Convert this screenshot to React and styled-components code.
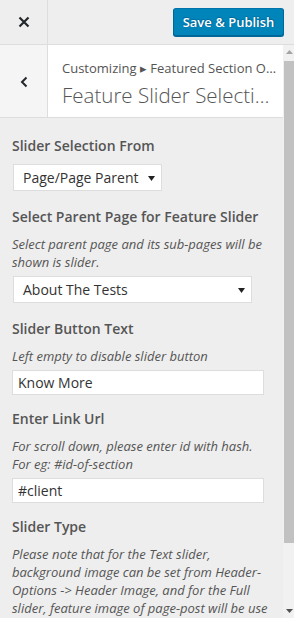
import React from "react";
import styled, { createGlobalStyle } from "styled-components";

const controls = [
  {
    id: 1,
    title: "Slider Selection From",
    type: "select",
    value: "Page/Page Parent",
    width: 149,
  },
  {
    id: 2,
    title: "Select Parent Page for Feature Slider",
    description: ["Select parent page and its sub-pages will be shown is slider."],
    type: "select",
    value: "About The Tests",
    width: 239,
  },
  {
    id: 3,
    title: "Slider Button Text",
    description: ["Left empty to disable slider button"],
    type: "text",
    value: "Know More",
  },
  {
    id: 4,
    title: "Enter Link Url",
    description: ["For scroll down, please enter id with hash.", "For eg: #id-of-section"],
    type: "text",
    value: "#client",
  },
  {
    id: 5,
    title: "Slider Type",
    description: [
      "Please note that for the Text slider, background image can be set from Header-Options -> Header Image, and for the Full slider, feature image of page-post will be use",
    ],
  },
];

const App = () => {
  return (
    <>
      <GlobalStyle />
      <Frame>
        <Header>
          <CloseButton aria-label="Close">
            <svg width="12" height="12" viewBox="0 0 12 12">
              <path d="M1.5 1.5 L10.5 10.5 M10.5 1.5 L1.5 10.5" stroke="#23282d" strokeWidth="2.2" fill="none" />
            </svg>
          </CloseButton>
          <PublishButton>Save &amp; Publish</PublishButton>
        </Header>
        <Body>
          <Main>
            <PanelHeading>
              <BackButton aria-label="Back">
                <svg width="10" height="12" viewBox="0 0 10 12">
                  <path d="M7.5 1.5 L3 6 L7.5 10.5" stroke="#23282d" strokeWidth="2" fill="none" />
                </svg>
              </BackButton>
              <HeadingText>
                <Breadcrumb>Customizing ▸ Featured Section Options</Breadcrumb>
                <PanelTitle>Feature Slider Selection</PanelTitle>
              </HeadingText>
            </PanelHeading>
            <Controls>
              {controls.map((c) => (
                <Control key={c.id} $space={c.type === "select" ? 16 : 14}>
                  <ControlTitle>{c.title}</ControlTitle>
                  {c.description && (
                    <Description>
                      {c.description.map((line, i) => (
                        <React.Fragment key={i}>
                          {i > 0 && <br />}
                          {line}
                        </React.Fragment>
                      ))}
                    </Description>
                  )}
                  {c.type === "select" && (
                    <SelectBox $width={c.width}>
                      <span>{c.value}</span>
                      <svg width="7" height="5" viewBox="0 0 7 5">
                        <path d="M0 0 H7 L3.5 5 Z" fill="#222" />
                      </svg>
                    </SelectBox>
                  )}
                  {c.type === "text" && <TextInput defaultValue={c.value} />}
                </Control>
              ))}
            </Controls>
          </Main>
          <Scrollbar>
            <ScrollArrow>
              <svg width="7" height="4" viewBox="0 0 7 4">
                <path d="M0 4 H7 L3.5 0 Z" fill="#a3a3a3" />
              </svg>
            </ScrollArrow>
            <Track>
              <Thumb />
            </Track>
            <ScrollArrow>
              <svg width="7" height="4" viewBox="0 0 7 4">
                <path d="M0 0 H7 L3.5 4 Z" fill="#505050" />
              </svg>
            </ScrollArrow>
          </Scrollbar>
        </Body>
      </Frame>
    </>
  );
};

export default App;

// Styled Components

const GlobalStyle = createGlobalStyle`
  html, body {
    margin: 0;
    padding: 0;
    background: #eee;
  }
  * {
    box-sizing: border-box;
  }
  body {
    font-family: "Open Sans", "Liberation Sans", sans-serif;
    color: #555;
  }
`;

const Frame = styled.div`
  width: 294px;
  height: 618px;
  display: flex;
  flex-direction: column;
  overflow: hidden;
  background: #eee;
`;

const Header = styled.div`
  height: 45px;
  flex-shrink: 0;
  display: flex;
  align-items: center;
  justify-content: space-between;
  border-bottom: 1px solid #ddd;
  padding-right: 10px;
`;

const CloseButton = styled.div`
  width: 48px;
  height: 44px;
  display: flex;
  align-items: center;
  justify-content: center;
  border-right: 1px solid #ddd;
`;

const PublishButton = styled.button`
  height: 28px;
  width: 111px;
  margin-bottom: 1px;
  padding: 0;
  font-family: "Open Sans", "Liberation Sans", sans-serif;
  font-size: 13px;
  font-weight: 600;
  color: #fff;
  background: #0085ba;
  border: 1px solid #0073aa;
  border-color: #0073aa #006799 #006799;
  border-radius: 3px;
  box-shadow: 0 1px 0 #006799;
  text-shadow: 0 -1px 1px #006799, 1px 0 1px #006799;
`;

const Body = styled.div`
  flex: 1;
  min-height: 0;
  display: flex;
`;

const Main = styled.div`
  flex: 1;
  min-width: 0;
  overflow: hidden;
  display: flex;
  flex-direction: column;
`;

const PanelHeading = styled.div`
  height: 73px;
  flex-shrink: 0;
  display: flex;
  background: #fff;
  border-bottom: 1px solid #ddd;
`;

const BackButton = styled.div`
  width: 48px;
  flex-shrink: 0;
  display: flex;
  align-items: center;
  justify-content: center;
  background: #f5f5f5;
  border-right: 1px solid #ddd;
  padding-top: 2px;
`;

const HeadingText = styled.div`
  flex: 1;
  min-width: 0;
  padding: 14px 5px 0 14px;
  display: flex;
  flex-direction: column;
  gap: 4px;
`;

const Breadcrumb = styled.div`
  font-size: 13px;
  line-height: 18px;
  color: #555;
  white-space: nowrap;
  overflow: hidden;
  text-overflow: ellipsis;
`;

const PanelTitle = styled.div`
  font-size: 20.5px;
  font-weight: 300;
  line-height: 28px;
  color: #555;
  white-space: nowrap;
  overflow: hidden;
  text-overflow: ellipsis;
`;

const Controls = styled.div`
  padding: 18px 12px 0 12px;
  display: flex;
  flex-direction: column;
`;

const Control = styled.div`
  display: flex;
  flex-direction: column;
  align-items: flex-start;
  margin-bottom: ${(p) => p.$space}px;
`;

const ControlTitle = styled.div`
  font-size: 14px;
  font-weight: 600;
  line-height: 20px;
  color: #555;
  margin-bottom: 8px;
`;

const Description = styled.div`
  font-size: 13px;
  font-style: italic;
  line-height: 18px;
  color: #555;
  margin-bottom: 5px;
  max-width: 259px;
`;

const SelectBox = styled.div`
  width: ${(p) => p.$width}px;
  height: 27px;
  margin-left: 1px;
  display: flex;
  align-items: center;
  justify-content: space-between;
  padding: 0 6px 0 9px;
  background: #fff;
  border: 1px solid #ddd;
  font-size: 14px;
  color: #333;

  svg {
    margin-top: 1px;
  }
`;

const TextInput = styled.input`
  width: 252px;
  height: 25px;
  padding: 0 5px;
  margin: 0;
  font-family: "Open Sans", "Liberation Sans", sans-serif;
  font-size: 14px;
  color: #333;
  background: #fff;
  border: 1px solid #ddd;
  outline: none;
`;

const Scrollbar = styled.div`
  width: 11px;
  flex-shrink: 0;
  display: flex;
  flex-direction: column;
  background: #f1f1f1;
`;

const ScrollArrow = styled.div`
  height: 14px;
  flex-shrink: 0;
  display: flex;
  align-items: center;
  justify-content: center;
  padding-left: 1px;
`;

const Track = styled.div`
  flex: 1;
  padding: 2px 0 0 1px;
`;

const Thumb = styled.div`
  height: 482px;
  background: #c1c1c1;
`;
